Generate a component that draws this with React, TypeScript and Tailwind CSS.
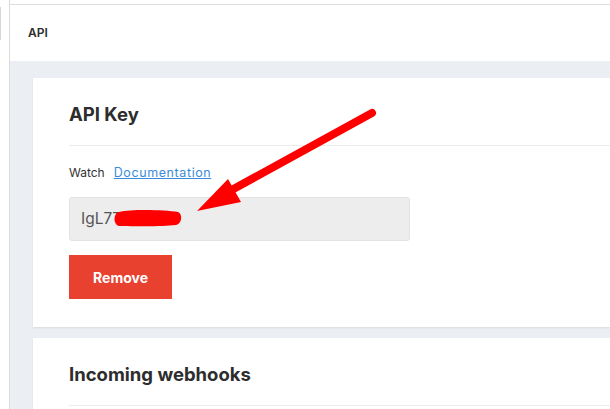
import React from "react";

/* ── Page ── */

export default function App() {
  return (
    <div className="relative flex h-[409px] w-[610px] overflow-hidden bg-white font-['Inter',sans-serif] text-[#2d2d2d]">
      {/* left rail */}
      <div className="relative w-[10px] shrink-0 border-r border-[#dcdcdc]">
        <div className="absolute left-0 top-[7px] h-[33px] w-px bg-[#d6d6d6]" />
      </div>

      <div className="flex min-w-0 flex-1 flex-col pt-[4px]">
        {/* header */}
        <div className="flex h-[57px] shrink-0 items-center border-t border-[#dedede] pl-[18px]">
          <span className="text-[12px] font-semibold">API</span>
        </div>

        {/* content */}
        <div className="flex flex-1 flex-col gap-[11px] bg-[#ebeef2] pl-[23px] pt-[17px]">
          <Card title="API Key">
            <div className="mt-[19px] text-[12px] leading-[16px]">
              <span className="text-[#333]">Watch</span>
              <a className="ml-[9px] text-[12.5px] tracking-[0.6px] text-[#3a8bd8] underline">
                Documentation
              </a>
            </div>

            <div className="mt-[16px] flex h-[44px] w-[341px] items-center rounded-[3px] border border-[#e2e2e2] bg-[#ededed] pl-[11px]">
              <span className="text-[15.5px] text-[#555]">IgL7T</span>
            </div>

            <button
              type="button"
              className="mt-[14px] h-[44px] w-[103px] bg-[#e8412f] text-[14px] font-bold text-white"
            >
              Remove
            </button>
            <div className="h-[28px]" />
          </Card>

          <Card title="Incoming webhooks">
            <div className="h-[40px]" />
          </Card>
        </div>
      </div>

      {/* annotation */}
      <svg
        className="pointer-events-none absolute left-0 top-0"
        width="610"
        height="409"
        viewBox="0 0 610 409"
      >
        <path
          d="M119 212 C132 209 165 210 178 212 C183 214 182 224 176 225 C160 227 132 226 119 226 C113 225 113 213 119 212 Z"
          fill="#ff0000"
        />
        <line
          x1="372"
          y1="113"
          x2="228"
          y2="192"
          stroke="#ff0000"
          strokeWidth="8"
          strokeLinecap="round"
        />
        <polygon points="197,211 228,179 241,202" fill="#ff0000" />
      </svg>
    </div>
  );
}

/* ── Sub-components ── */

function Card({
  title,
  children,
}: {
  title: string;
  children: React.ReactNode;
}) {
  return (
    <div className="bg-white pl-[36px] shadow-[0_1px_2px_rgba(0,0,0,0.08)]">
      <h2 className="pt-[24px] text-[18.5px] font-bold leading-[24px] text-[#2d2d2d]">
        {title}
      </h2>
      <div className="mt-[19px] border-t border-[#ececec]" />
      {children}
    </div>
  );
}
